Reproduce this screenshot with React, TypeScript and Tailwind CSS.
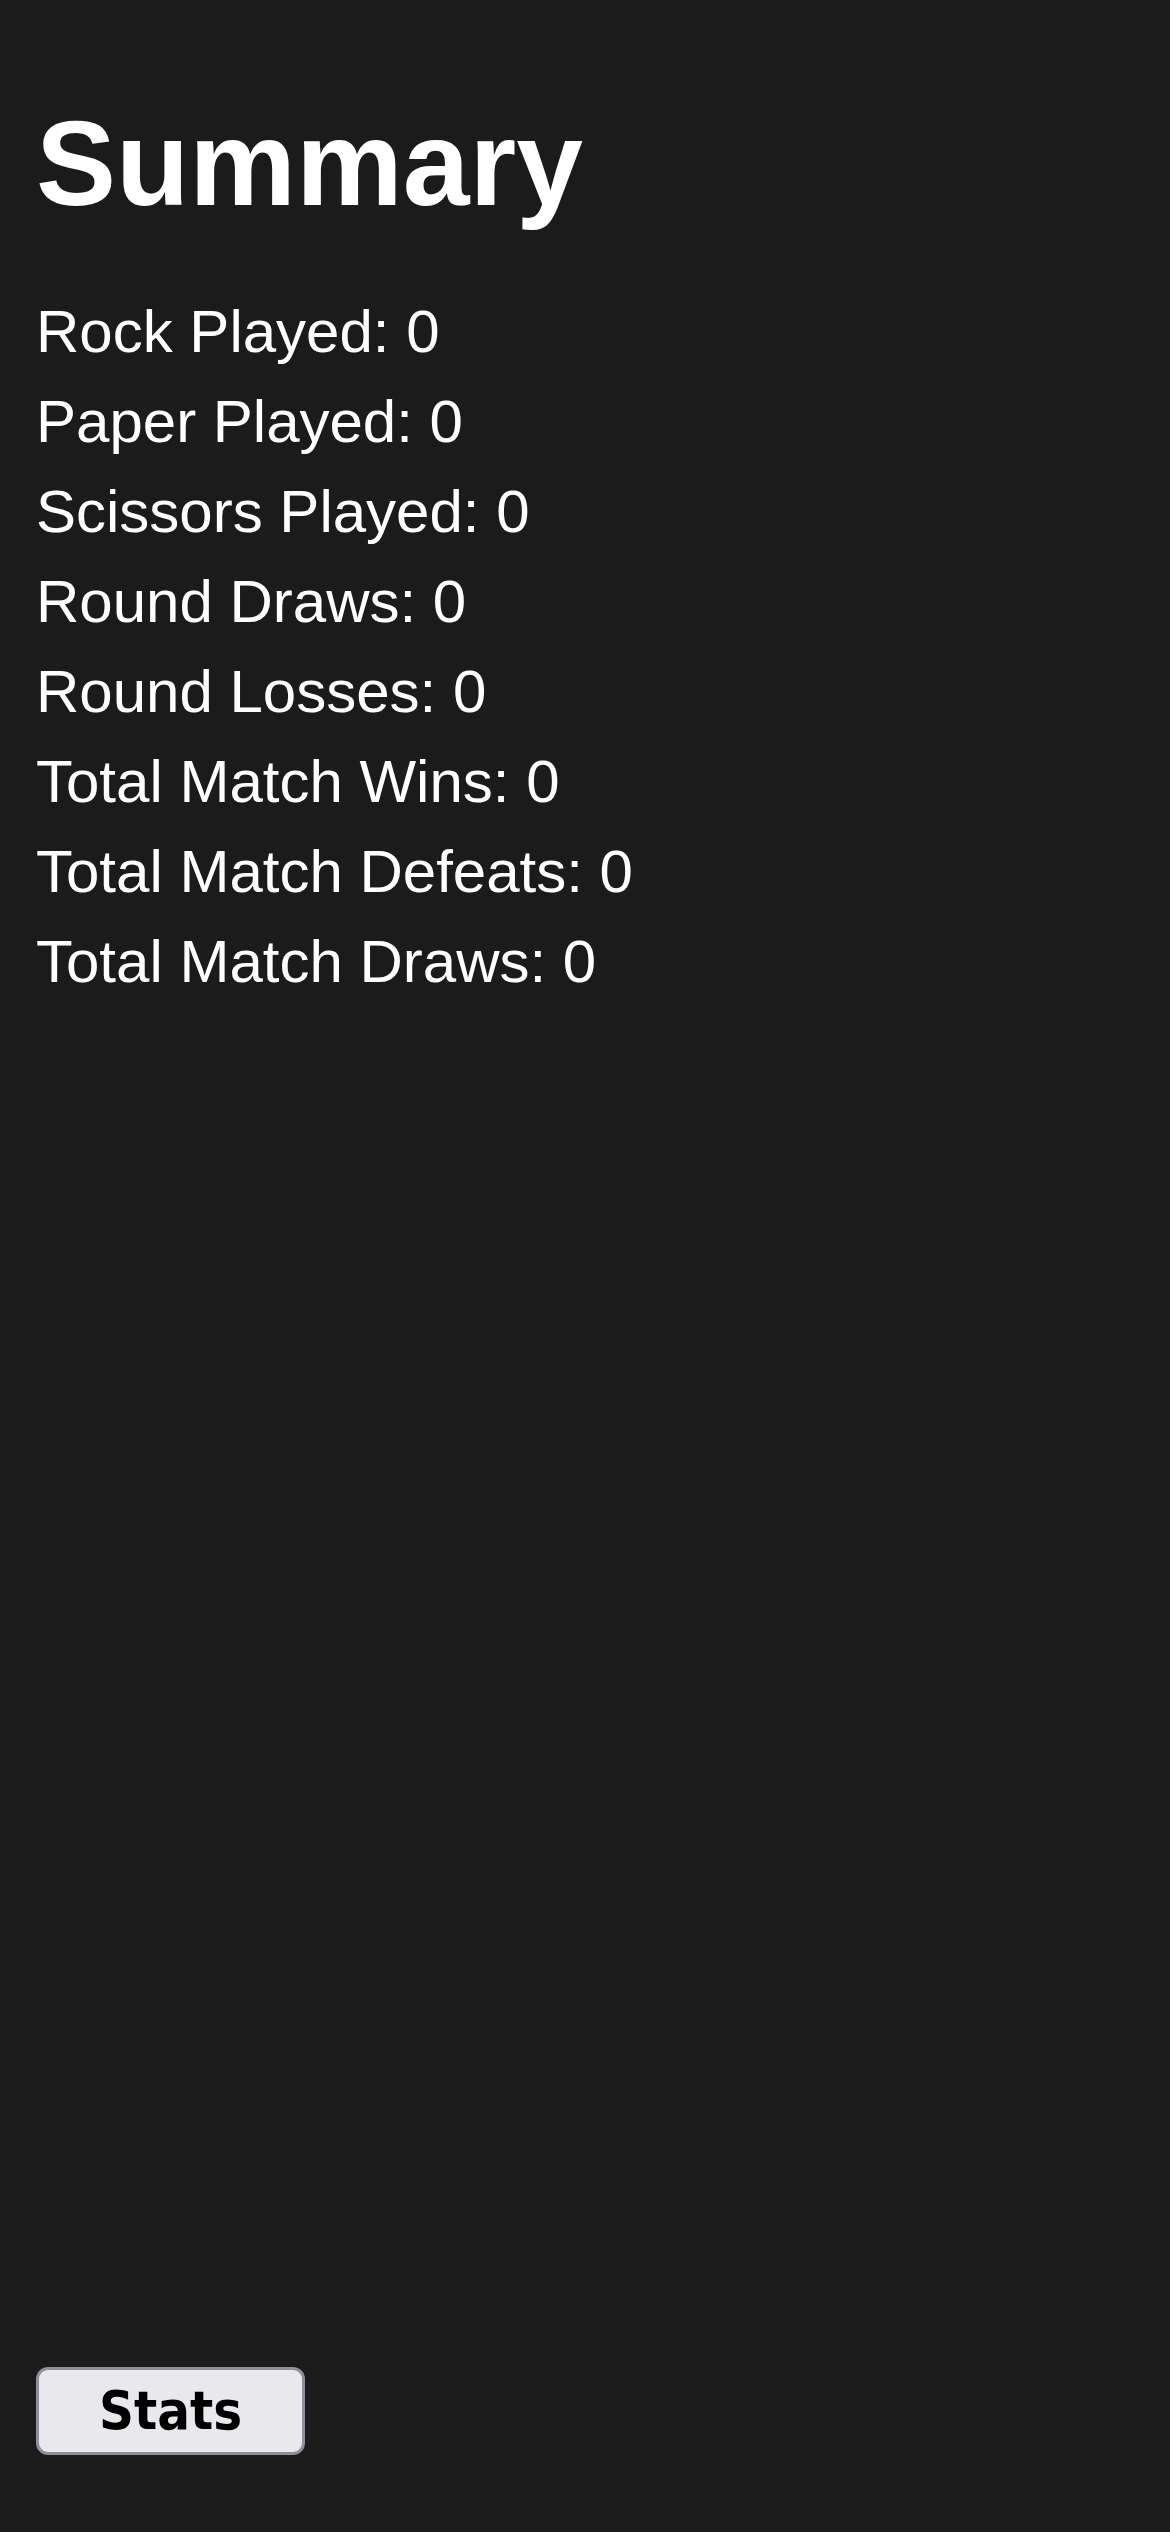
import React from 'react';

const STATS = [
  { label: 'Rock Played', value: 0 },
  { label: 'Paper Played', value: 0 },
  { label: 'Scissors Played', value: 0 },
  { label: 'Round Draws', value: 0 },
  { label: 'Round Losses', value: 0 },
  { label: 'Total Match Wins', value: 0 },
  { label: 'Total Match Defeats', value: 0 },
  { label: 'Total Match Draws', value: 0 },
];

export default function App() {
  return (
    <div className="flex min-h-screen flex-col bg-[#1b1b1b] px-[36px] pb-[77px] pt-[94px] font-['Liberation_Sans',Arial,sans-serif] text-white">
      <h1 className="text-[120px] font-bold leading-[1.15]">Summary</h1>

      <div className="mt-[55px] flex flex-col">
        {STATS.map((stat) => (
          <div key={stat.label} className="text-[60px] leading-[90px]">
            {stat.label}: {stat.value}
          </div>
        ))}
      </div>

      <div className="mt-auto">
        <button
          type="button"
          className="h-[88px] w-[269px] rounded-[12px] border-[3px] border-[#8f8f9d] bg-[#e9e9ed] font-['DejaVu_Sans_Condensed','DejaVu_Sans',sans-serif] text-[54px] font-bold leading-none text-black"
        >
          Stats
        </button>
      </div>
    </div>
  );
}
